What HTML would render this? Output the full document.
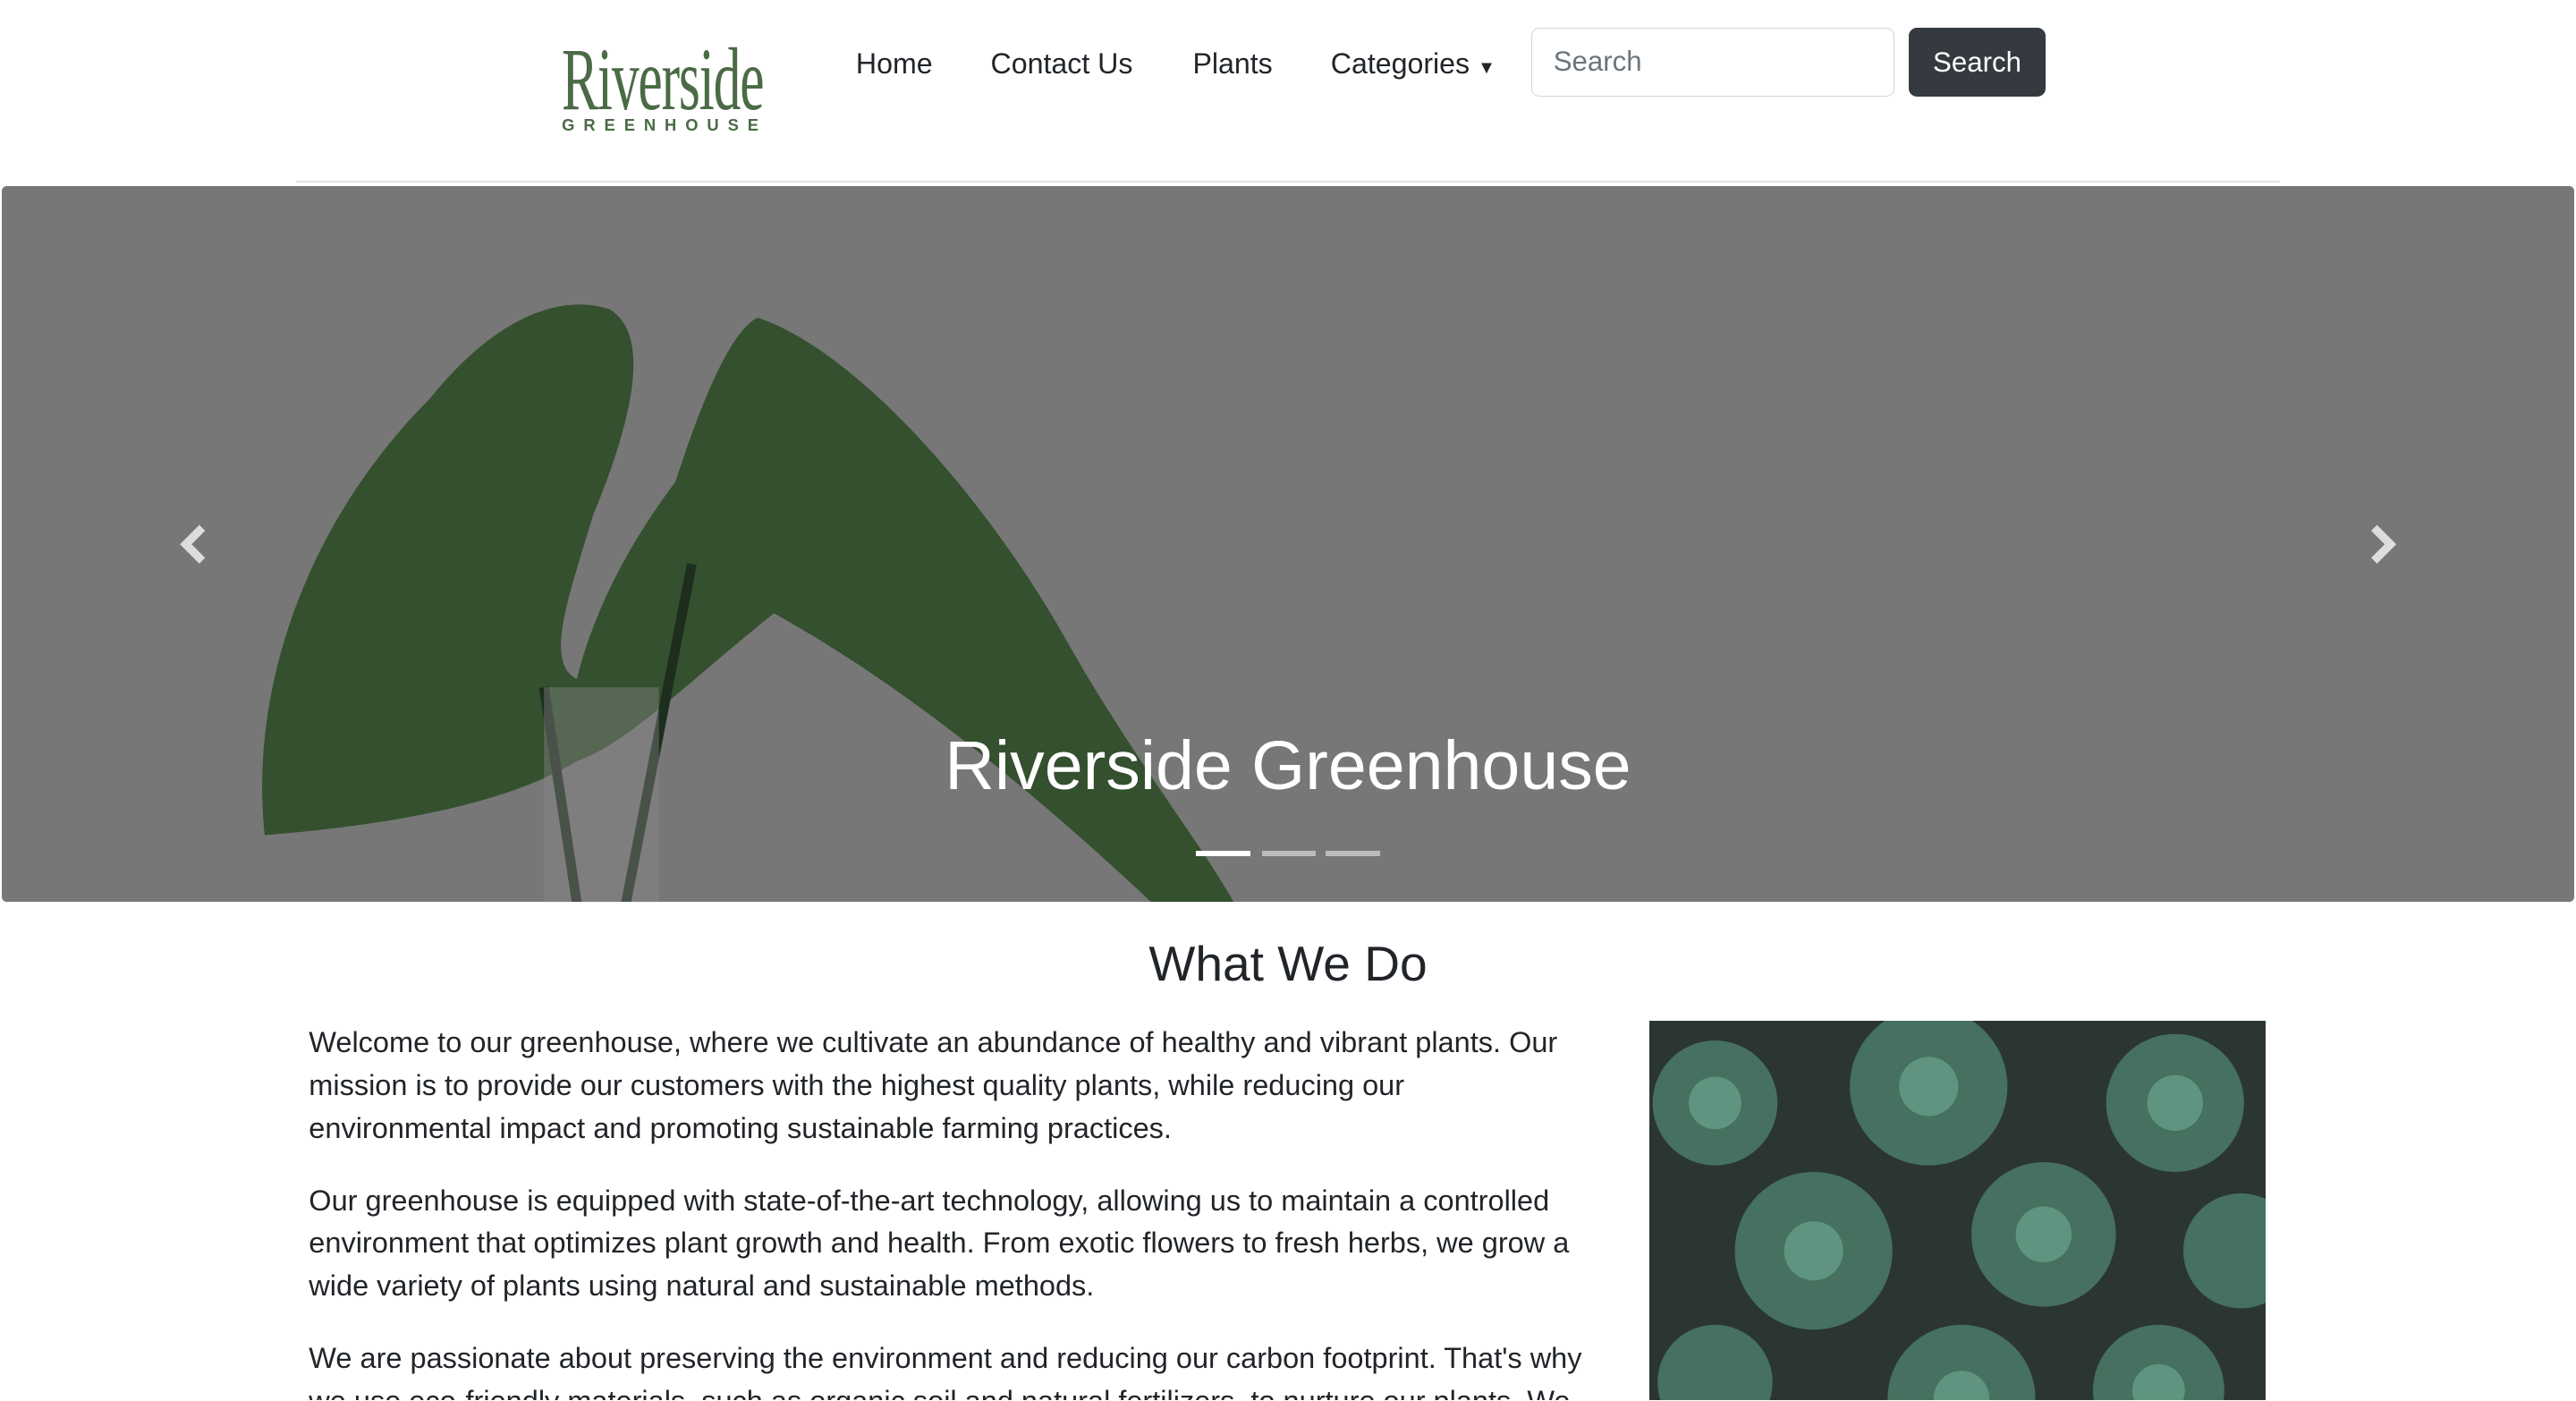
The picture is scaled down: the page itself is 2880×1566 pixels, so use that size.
<!DOCTYPE html>
<html><head><meta charset="utf-8"><style>
html,body{margin:0;padding:0;background:#fff;overflow:hidden}
#w{zoom:1.83673;width:1568px;height:852px;position:relative;overflow:hidden;font-family:"Liberation Sans",sans-serif;color:#212529}
.nav a{position:absolute;top:29px;font-size:17.5px;color:#212529;text-decoration:none}
.logo{position:absolute;left:342px;top:24px;color:#4a6b45;font-family:"Liberation Serif",serif}
.logo .r{font-size:54px;transform:scaleX(.62);transform-origin:left;display:block;line-height:50px;letter-spacing:-1px}
.logo .g{font-size:10px;letter-spacing:5.4px;font-weight:bold;font-family:"Liberation Sans",sans-serif;margin-top:-4px}
.inp{position:absolute;left:932px;top:17px;width:221px;height:42px;border:1px solid #ced4da;border-radius:5px;box-sizing:border-box;padding:10px 13px;font-size:17px;color:#6c757d}
.btn{position:absolute;left:1162px;top:17px;width:83px;height:42px;background:#343a40;border-radius:5px;color:#fff;font-size:17px;text-align:center;line-height:42px}
.hr{position:absolute;left:180px;top:110px;width:1208px;height:1px;background:#dee2e6}
.hero{position:absolute;left:1px;top:113px;width:1566px;height:436px;background:#777;overflow:hidden;border-radius:3px}
.cap{position:absolute;left:0;right:0;top:442px;text-align:center;color:#fff;font-size:42px;font-weight:500}
.ind{position:absolute;top:518px;width:33px;height:3px;background:#fff;opacity:.5}
h2{position:absolute;left:0;right:0;top:569px;margin:0;text-align:center;font-size:30px;font-weight:500}
.txt{position:absolute;left:188px;top:622px;width:778px;font-size:17.7px;line-height:26px}
.txt p{margin:0 0 18px}
.succ{position:absolute;left:1004px;top:621px;width:375px;height:240px;overflow:hidden;background:#2b3532}
</style></head><body><div id="w">
<div class="logo"><span class="r">Riverside</span><div class="g">GREENHOUSE</div></div>
<div class="nav"><a style="left:521px">Home</a><a style="left:603px">Contact Us</a><a style="left:726px">Plants</a><a style="left:810px">Categories <span style="font-size:11px">▼</span></a></div>
<div class="inp">Search</div><div class="btn">Search</div>
<div class="hr"></div>
<div class="hero">
<svg width="1566" height="436" style="position:absolute;left:0;top:0">
<path d="M160 395 C150 300 190 200 260 130 C300 80 340 65 370 75 C395 90 385 140 360 200 C345 250 330 290 350 300 C360 260 380 220 410 180 C420 150 440 90 460 80 C520 100 600 190 650 280 C690 350 730 400 750 436 L700 436 C640 380 560 310 470 260 C420 300 380 340 350 350 C300 380 220 390 160 395Z" fill="#34502f"/>
<path d="M330 305 L350 436 M420 230 L380 436" stroke="#1e2e1e" stroke-width="6" fill="none"/>
<rect x="330" y="305" width="70" height="131" fill="#8a8a8a" opacity=".4"/>
<path d="M122 208 L112 218 L122 228" stroke="#ddd" stroke-width="5" fill="none"/>
<path d="M1444 208 L1454 218 L1444 228" stroke="#ddd" stroke-width="5" fill="none"/>
</svg>
</div>
<div class="cap">Riverside Greenhouse</div>
<div class="ind" style="left:728px;opacity:1"></div><div class="ind" style="left:768px"></div><div class="ind" style="left:807px"></div>
<h2>What We Do</h2>
<div class="txt"><p>Welcome to our greenhouse, where we cultivate an abundance of healthy and vibrant plants. Our mission is to provide our customers with the highest quality plants, while reducing our environmental impact and promoting sustainable farming practices.</p>
<p>Our greenhouse is equipped with state-of-the-art technology, allowing us to maintain a controlled environment that optimizes plant growth and health. From exotic flowers to fresh herbs, we grow a wide variety of plants using natural and sustainable methods.</p>
<p>We are passionate about preserving the environment and reducing our carbon footprint. That's why we use eco-friendly materials, such as organic soil and natural fertilizers, to nurture our plants. We</p></div>
<div class="succ"><svg width="375" height="240">
<g fill="#46705f"><circle cx="40" cy="50" r="38"/><circle cx="170" cy="40" r="48"/><circle cx="320" cy="50" r="42"/><circle cx="100" cy="140" r="48"/><circle cx="240" cy="130" r="44"/><circle cx="360" cy="140" r="35"/><circle cx="40" cy="220" r="35"/><circle cx="190" cy="230" r="45"/><circle cx="310" cy="225" r="40"/></g>
<g fill="#5f9580"><circle cx="40" cy="50" r="16"/><circle cx="170" cy="40" r="18"/><circle cx="320" cy="50" r="17"/><circle cx="100" cy="140" r="18"/><circle cx="240" cy="130" r="17"/><circle cx="190" cy="230" r="17"/><circle cx="310" cy="225" r="16"/></g>
</svg></div>
</div></body></html>
